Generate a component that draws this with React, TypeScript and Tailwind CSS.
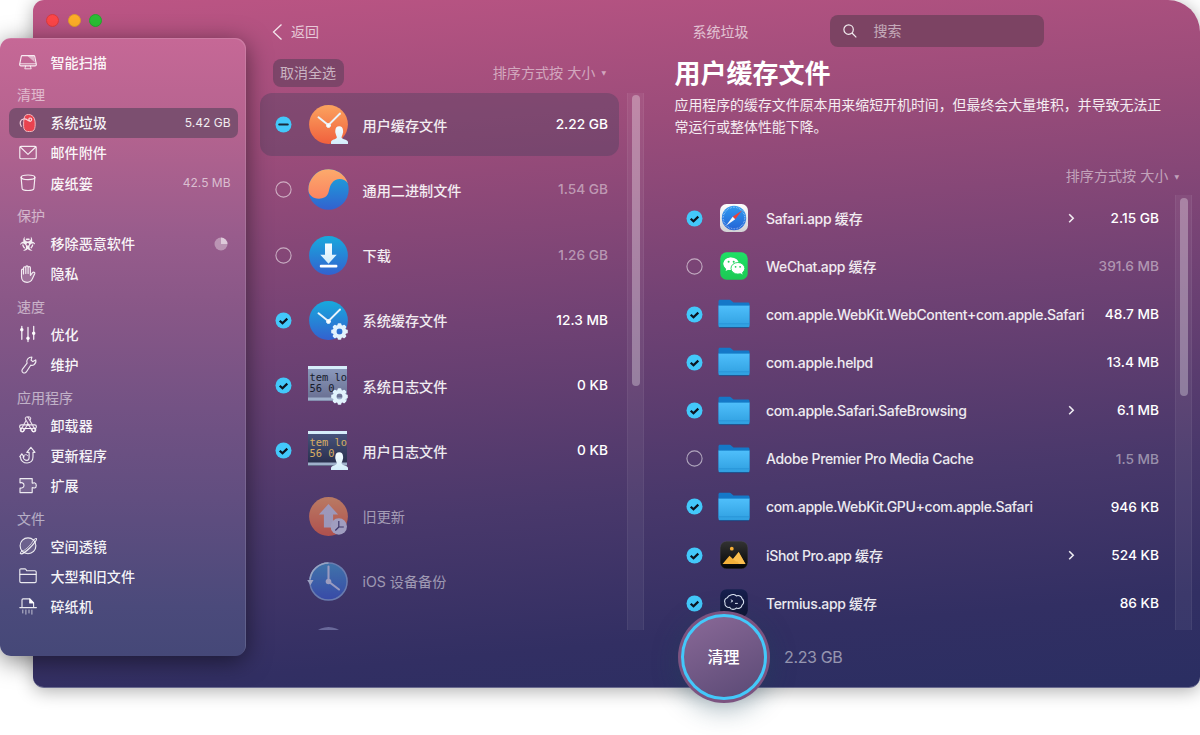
import React from "react";
import { FaBiohazard } from "react-icons/fa";

type P = { children?: React.ReactNode };

const Line = ({ children }: P) => (
  <svg width="20" height="20" viewBox="0 0 20 20" fill="none" stroke="#fff" strokeOpacity=".88" strokeWidth="1.15" strokeLinecap="round" strokeLinejoin="round">
    {children}
  </svg>
);

const sideIcons: Record<string, React.ReactNode> = {
  scan: (
    <Line>
      <path d="M4.2 3.6h11.6c.5 0 .8.3.9.8l1.6 7.8c.2 1-.4 1.6-1.3 1.6H3c-.9 0-1.500-.6-1.300-1.600l1.600-7.800c.1-.5.4-.8.9-.8z" />
      <path d="M2.300 11.800h15.400M7.600 14l-.8 2.800h6.400l-.8-2.800" strokeWidth=".9" />
      <path d="M9.500 4h6.200l1.200 6.500z" fill="#fff" fillOpacity=".5" stroke="none" />
    </Line>
  ),
  junk: (
    <svg width="20" height="20" viewBox="0 0 20 20" fill="none">
      <path d="M7.500 2.300C9 1.200 12.300 1.200 14 2.600c2.200 1.500 3.200 4.200 3.200 8.500 0 3.400-.6 6.200-2.500 7-1.600.6-5.200.6-6.700 0-1.900-.8-2.600-3.600-2.400-7 .1-3.600.3-7.200 1.900-8.800z" fill="#e9424f" stroke="#f3b6bd" strokeWidth="1" />
      <path d="M3.300 13.300C1.200 10.500 2 6.600 5.500 6c3.600-.6 4.600 2.500 6.700 2.300 2-.3 2-3.200.1-3.300-1.600 0-1.900 1.700-.8 2.300" stroke="#f7d3dc" strokeWidth="1.200" strokeLinecap="round" />
    </svg>
  ),
  mail: (
    <Line>
      <rect x="1.800" y="3.300" width="16.400" height="12.400" rx="1.300" />
      <path d="M2.300 4L10 11.300l7.700-7.300" />
    </Line>
  ),
  trash: (
    <Line>
      <ellipse cx="10" cy="4.300" rx="6.900" ry="2.300" />
      <path d="M3.100 4.400l1 11c.2 1.500 2.600 2.100 5.900 2.100s5.700-.6 5.900-2.100l1-11" />
    </Line>
  ),
  bio: (
    <span className="flex size-5 items-center justify-center text-white/90">
      <FaBiohazard size={15.5} />
    </span>
  ),
  hand: (
    <Line>
      <path d="M3.500 12.800V6.200c0-1.500 2-1.500 2 0V10 3.900c0-1.600 2.300-1.600 2.300 0v5.500V3c0-1.600 2.300-1.600 2.300 0v6.400V3.800c0-1.600 2.300-1.600 2.300 0v7.500l1.900-2.400c1-1.300 3-.7 2.400.8l-2.400 5.200c-.9 2.300-2.600 3.400-5.200 3.400-3.500 0-5.600-1.800-5.600-5.500z" fill="#fff" fillOpacity=".15" />
    </Line>
  ),
  sliders: (
    <Line>
      <path d="M3.800 2.300v13M10 3.500v14M15.700 2.300v13" strokeWidth="1.300" />
      <circle cx="3.800" cy="5.700" r="1.200" fill="#fff" />
      <circle cx="10" cy="14.200" r="1.200" fill="#fff" />
      <circle cx="15.700" cy="9.300" r="1.200" fill="#fff" />
    </Line>
  ),
  wrench: (
    <Line>
      <path d="M13.900 2l-.8 3.200 1.800 1.400 2.800-1.700c.5 1.700-.1 3.700-1.700 4.800-1 .7-2.200.8-3.300.5l-4.200 6.500c-.9 1.300-2.400 1.700-3.500.9-1.200-.8-1.400-2.300-.5-3.500l4.600-5.900c-.6-1.300-.4-2.900.5-4.200 1-1.300 2.700-2 4.300-2z" />
    </Line>
  ),
  apps: (
    <Line>
      <rect x="1.600" y="9.900" width="16.800" height="3.600" rx="1.800" />
      {["M11.100 3.500L4.600 14.900", "M8.900 3.500L15.400 14.900"].map((d) => (
        <g key={d}>
          <path d={d} strokeWidth="4.300" strokeOpacity="1" stroke="#e8dcea" />
          <path d={d} strokeWidth="2.100" strokeOpacity="1" stroke="#775385" />
        </g>
      ))}
      <path d="M6.500 9.900h7M6.500 13.500h7" />
      <circle cx="4.100" cy="15" r="1.900" />
      <circle cx="15.900" cy="15" r="1.900" />
    </Line>
  ),
  update: (
    <Line>
      <path d="M8.800 7.400L12.900 2.300 17 7.400h-2v4.600c0 3.600-2.400 6-5.900 6-3.700 0-6.600-2.500-6.600-6l-.8-.2L3.800 8.800l2.300 3H5.200c0 2 1.700 3.600 3.700 3.600 1.600 0 2.200-1.200 2.200-2.900V7.400z" />
      <path d="M5.300 12c.6-3 3.600-3 4.600-1.200" strokeWidth=".9" />
    </Line>
  ),
  ext: (
    <Line>
      <path d="M2 2.600h12.200v4.500c.9.700 1-.5 2.200-.3 1.100.2 1.900 1.200 1.900 2.600s-.8 2.400-1.900 2.600c-1.200.3-1.300-1-2.200-.3v4.900H2V12c1 .3 4 0 4-2.800S3 6.500 2 6.900z" fill="#fff" fillOpacity=".12" />
    </Line>
  ),
  lens: (
    <Line>
      <circle cx="10" cy="9.800" r="7.900" fill="#fff" fillOpacity=".12" />
      <path d="M15.300 4.100c1.500-1.200 2.700-1.800 3.100-1.400.8.8-2.400 5.100-6.700 9.300s-8.400 6.500-9.200 5.700c-.4-.4.2-1.600 1.500-3.200" />
      <path d="M15 4.900C13.400 8.300 8.700 13 5.400 14.800" strokeWidth=".7" />
    </Line>
  ),
  folder: (
    <Line>
      <path d="M1.800 15.300V4c0-.7.500-1.200 1.200-1.200h3.800c.6 0 .9.200 1.200.7l.7 1.200h8.200c.8 0 1.300.5 1.300 1.300v9.300c0 .8-.5 1.300-1.300 1.300H3.100c-.8 0-1.300-.5-1.300-1.300z" />
      <path d="M2.200 8.300h15.600" />
    </Line>
  ),
  shred: (
    <Line>
      <path d="M1.800 10.600h16.600M4 10V2.900c0-.7.400-1 1-1h6.700l3.900 3.900V10" />
      <path d="M11.700 2v4h3.800z" fill="#fff" />
      <path d="M4.800 13v3M7.900 13v4.200M11 13v3M13.900 13v4.200" strokeWidth="1" strokeOpacity=".65" />
    </Line>
  ),
};

type SideRow = { head?: string; icon?: string; label?: string; size?: string; active?: boolean; pie?: boolean };

const side: SideRow[] = [
  { icon: "scan", label: "智能扫描" },
  { head: "清理" },
  { icon: "junk", label: "系统垃圾", size: "5.42 GB", active: true },
  { icon: "mail", label: "邮件附件" },
  { icon: "trash", label: "废纸篓", size: "42.5 MB" },
  { head: "保护" },
  { icon: "bio", label: "移除恶意软件", pie: true },
  { icon: "hand", label: "隐私" },
  { head: "速度" },
  { icon: "sliders", label: "优化" },
  { icon: "wrench", label: "维护" },
  { head: "应用程序" },
  { icon: "apps", label: "卸载器" },
  { icon: "update", label: "更新程序" },
  { icon: "ext", label: "扩展" },
  { head: "文件" },
  { icon: "lens", label: "空间透镜" },
  { icon: "folder", label: "大型和旧文件" },
  { icon: "shred", label: "碎纸机" },
];

function Sidebar() {
  return (
    <aside className="absolute top-[38px] left-0 h-[618px] w-[246px] rounded-[11px] bg-[linear-gradient(180deg,#c66896_0%,#b4638f_15%,#985c8c_32%,#885787_44%,#735284_60%,#5d4d7f_78%,#4b4a7b_92%,#454878_100%)] px-[8.500px] pt-[9px] shadow-[inset_-1px_1px_0_rgba(255,255,255,0.13),0_5px_24px_rgba(0,0,0,0.5)]">
      {side.map((r, i) =>
        r.head ? (
          <div key={i} className="h-[30.25px] pt-[3px] pl-[8.500px] text-sm leading-[30px] text-white/55">
            {r.head}
          </div>
        ) : (
          <div
            key={i}
            className={
              "flex h-[30.25px] w-[229px] items-center rounded-[7px] pr-[7px] pl-[9px] " + (r.active ? "bg-[#7c4f70]" : "")
            }
          >
            {sideIcons[r.icon!]}
            <span className="ml-[13px] flex-1 text-[14.100px] font-medium text-white/95">{r.label}</span>
            {r.size && (
              <span className={r.active ? "text-[12px] text-white/90" : "text-[12px] text-white/60"}>{r.size}</span>
            )}
            {r.pie && (
              <svg width="14" height="14" viewBox="0 0 14 14" className="mr-[3px]">
                <circle cx="7" cy="7" r="6.500" fill="#fff" fillOpacity=".35" />
                <path d="M7 7V.5A6.500 6.500 0 0 1 13.500 7z" fill="#fff" fillOpacity=".5" />
              </svg>
            )}
          </div>
        ),
      )}
    </aside>
  );
}

type State = "on" | "off" | "part" | "none";

function Check({ state }: { state: State }) {
  return (
    <svg width="17" height="17" viewBox="0 0 17 17" fill="none" className="shrink-0">
      {state === "off" && <circle cx="8.500" cy="8.500" r="7.600" stroke="#fff" strokeOpacity=".55" strokeWidth="1.100" />}
      {(state === "on" || state === "part") && <circle cx="8.500" cy="8.500" r="8" fill="#43c8fa" />}
      {state === "on" && <path d="M4.700 8.700l2.800 2.600 4.800-4.700" stroke="#0c1420" strokeWidth="2.200" />}
      {state === "part" && <path d="M4.300 8.500h8.400" stroke="#1b2a3b" strokeWidth="2.200" strokeLinecap="round" />}
    </svg>
  );
}

const Person = () => (
  <path d="M25 42v-2.200c.3-2 5-2.600 5.800-4.100.3-1-.8-2.200-1.100-4-.4-1-.6-2-.4-3 .1-3 1.600-4.400 3.900-4.400s3.800 1.400 3.900 4.400c.2 1 0 2-.4 3-.3 1.800-1.400 3-1.100 4 .8 1.500 6.100 2.100 6.400 4.100V42z" fill="url(#ice)" />
);

const Gear = () => (
  <g transform="translate(33.500 33.500)">
    {[0, 45, 90, 135, 180, 225, 270, 315].map((a) => (
      <rect key={a} x="-1.900" y="-8.300" width="3.800" height="5" rx="1" fill="#e2f3fd" transform={`rotate(${a})`} />
    ))}
    <circle r="4.900" fill="none" stroke="#e2f3fd" strokeWidth="3.800" />
  </g>
);

const Hands = () => (
  <g stroke="#e9f4fb" strokeLinecap="round">
    <path d="M12.500 15.300l10 8" strokeWidth="2" />
    <path d="M34 11.500L22.500 23" strokeWidth="1.800" />
    <circle cx="22.500" cy="23.500" r="2" fill="#fff" />
  </g>
);

const junkIcons: Record<string, React.ReactNode> = {
  userCache: (
    <>
      <circle cx="22.500" cy="22.500" r="19.400" fill="url(#orange)" />
      <Hands />
      <Person />
    </>
  ),
  binary: (
    <>
      <circle cx="22.500" cy="22.500" r="20.200" fill="url(#blue)" />
      <path d="M2.400 22.500a20.200 20.200 0 0 1 39.400-6.300c-4-5.500-12-5.500-16 0-2.600 3.600-2.200 6.300-3.500 9.800-1.300 3.700-5 5.700-9.300 5.700-6.300 0-10.600-4-10.600-9.200z" fill="url(#peach)" />
    </>
  ),
  download: (
    <>
      <circle cx="22.500" cy="22.500" r="19.400" fill="url(#blue)" />
      <path d="M19 10.500h7v11.300h4.700l-8.200 8.900-8.200-8.900H19z" fill="url(#ice)" />
      <rect x="13.800" y="31.800" width="17.600" height="2.700" rx="1" fill="#fff" />
    </>
  ),
  sysCache: (
    <>
      <circle cx="22.500" cy="22.500" r="19.400" fill="url(#blue)" />
      <Hands />
      <Gear />
    </>
  ),
  oldUpdate: (
    <g opacity=".62">
      <circle cx="22.500" cy="22.500" r="19.400" fill="url(#orange)" />
      <path d="M22.500 10l9.600 10.500h-5v13h-9.200v-13h-5z" fill="#cfd2ea" />
      <circle cx="32.800" cy="32.500" r="8.200" fill="#d6dcf3" />
      <path d="M32.800 27v6h5M32.800 33l-3.500 3.500" stroke="#39376a" strokeWidth="1.200" fill="none" />
    </g>
  ),
  ios: (
    <g opacity=".68">
      <circle cx="22.500" cy="22.500" r="18.600" fill="url(#blueDeep)" stroke="#7f9fd2" strokeWidth="1.500" />
      <path d="M4 20.500a18.600 18.600 0 0 1 18.500-16.600" fill="none" stroke="#bed9ee" strokeWidth="1.500" />
      <path d="M1.200 21h6.300l-3.100 5.300z" fill="#c6d4ec" />
      <path d="M22.500 7.500v15l10.500 8" fill="none" stroke="#c3cbea" strokeWidth="2.100" strokeLinecap="round" />
      <circle cx="22.500" cy="22.500" r="2.800" fill="#c9cfe9" />
    </g>
  ),
  last: <circle cx="22.500" cy="23" r="20" fill="#69699a" />,
};

function LogIcon({ user }: { user?: boolean }) {
  return (
    <>
      <rect x="2" y="3" width="39" height="35" fill={user ? "url(#logDark)" : "url(#logLight)"} />
      <rect x="2" y="3" width="39" height="3" fill="#d6eefa" />
      <rect x="2" y="34.500" width="39" height="3" fill="#9fb0cb" />
      <g fill={user ? "#d9ad62" : "#171b2c"} fontFamily="DejaVu Sans Mono" fontSize="10.400">
        <text x="3.400" y="17.600">tem lo</text>
        <text x="3.400" y="29.400">56 0</text>
      </g>
      {user ? <Person /> : <Gear />}
    </>
  );
}

function Defs() {
  const g = (id: string, a: string, b: string) => (
    <linearGradient id={id} x1="0" y1="0" x2="0" y2="1">
      <stop offset="0" stopColor={a} />
      <stop offset="1" stopColor={b} />
    </linearGradient>
  );
  return (
    <svg width="0" height="0" className="absolute">
      <defs>
        {g("orange", "#fba35f", "#f0603d")}
        {g("peach", "#fcaa6c", "#fb8460")}
        {g("blue", "#18a9dd", "#3361cf")}
        {g("blueDeep", "#3f92c9", "#3755c6")}
        {g("ice", "#f6fcff", "#d3edfb")}
        {g("logLight", "#8d9cbf", "#676d90")}
        {g("logDark", "#4a5680", "#262b48")}
        {g("fold", "#4fbffb", "#2f9fe0")}
        {g("tile", "#fdfdfd", "#d2d2d4")}
        {g("safari", "#2f9bf0", "#2463d6")}
        {g("wechat", "#1fe166", "#1cc854")}
        {g("dark", "#333", "#050505")}
        {g("navy", "#182150", "#0d1130")}
      </defs>
    </svg>
  );
}

type Junk = { icon: string; label: string; size?: string; state: State; sel?: boolean };

const junk: Junk[] = [
  { icon: "userCache", label: "用户缓存文件", size: "2.22 GB", state: "part", sel: true },
  { icon: "binary", label: "通用二进制文件", size: "1.54 GB", state: "off" },
  { icon: "download", label: "下载", size: "1.26 GB", state: "off" },
  { icon: "sysCache", label: "系统缓存文件", size: "12.3 MB", state: "on" },
  { icon: "sysLog", label: "系统日志文件", size: "0 KB", state: "on" },
  { icon: "userLog", label: "用户日志文件", size: "0 KB", state: "on" },
  { icon: "oldUpdate", label: "旧更新", state: "none" },
  { icon: "ios", label: "iOS 设备备份", state: "none" },
  { icon: "last", label: "", state: "none" },
];

function SortBy() {
  return (
    <span className="flex items-center text-[14.100px] text-white/50">
      排序方式按 大小<span className="ml-[6px] font-['DejaVu_Sans'] text-[6px]">▼</span>
    </span>
  );
}

function JunkColumn() {
  return (
    <section className="flex w-[414px] flex-col pl-[14px]">
      <div className="flex h-[59px] items-center pt-[4px] pl-[12px] text-sm text-white/70">
        <svg width="11" height="18" viewBox="0 0 11 18" fill="none" className="mr-[8px]">
          <path d="M9.500 1.500L1.500 9l8 7.500" stroke="#fff" strokeOpacity=".85" strokeWidth="1.300" />
        </svg>
        返回
      </div>
      <div className="flex h-7 items-center justify-between pr-[54px] pl-[12.500px]">
        <span className="flex h-7 w-[71px] items-center justify-center rounded-[8px] bg-[#7d4569] text-sm text-white/60">取消全选</span>
        <SortBy />
      </div>
      <div className="mt-1.5 flex h-[537px] overflow-hidden">
        <div className="w-[367px] shrink-0">
          {junk.map((j) => (
            <div key={j.icon} className="h-[65.250px]">
              <div className={"flex h-[63px] w-[358.500px] items-center rounded-[12px] pr-[10.500px] pl-[15px] " + (j.sel ? "bg-[#42405c]/35" : "")}>
                <Check state={j.state} />
                <svg width="45" height="45" viewBox="0 0 45 45" className="ml-[14px] shrink-0">
                  {j.icon === "sysLog" ? <LogIcon /> : j.icon === "userLog" ? <LogIcon user /> : junkIcons[j.icon]}
                </svg>
                <span className={"ml-[11.500px] flex-1 pt-[1.500px] text-[14.150px] " + (j.state === "none" ? "text-white/50" : "font-medium text-white/90")}>{j.label}</span>
                {j.size && <span className={"text-[13.700px] font-medium " + (j.state === "off" ? "text-white/45" : "text-white")}>{j.size}</span>}
              </div>
            </div>
          ))}
        </div>
        <div className="h-[537px] w-[17px] border-x border-white/5 bg-white/5 px-[4px] pt-[2px]">
          <div className="h-[291px] w-[8px] rounded-full bg-white/30" />
        </div>
      </div>
    </section>
  );
}

function FileIcon({ kind }: { kind: string }) {
  if (kind === "folder")
    return (
      <svg width="32" height="32" viewBox="0 0 32 32">
        <path d="M.5 27V3.300c0-1 .6-1.600 1.600-1.600h9c1 0 1.600.3 2.300 1l2.100 1.900h14.400c1 0 1.600.6 1.600 1.600V27z" fill="#1478c8" />
        <path d="M.5 7.500h31v20.300c0 1-.6 1.600-1.600 1.600H2.100c-1 0-1.600-.6-1.600-1.600z" fill="url(#fold)" />
        <path d="M.5 7.300h31M.5 25.800h31" stroke="#2089cf" strokeWidth=".6" />
        <path d="M1.300 29.600h29.400" stroke="#174a86" strokeWidth=".8" />
      </svg>
    );
  if (kind === "safari")
    return (
      <svg width="32" height="32" viewBox="0 0 32 32">
        <rect x="2" y="2" width="28" height="28" rx="6.500" fill="url(#tile)" />
        <circle cx="16" cy="16" r="12.200" fill="url(#safari)" />
        <circle cx="16" cy="16" r="10.800" fill="none" stroke="#d8ecff" strokeOpacity=".75" strokeWidth="1.400" strokeDasharray=".5 1.100" />
        <path d="M24 8.500l-6.800 8.800-2.500-2.600z" fill="#ef4136" />
        <path d="M8 23.700l6.700-9 2.500 2.600z" fill="#f6f9fc" />
      </svg>
    );
  if (kind === "wechat")
    return (
      <svg width="32" height="32" viewBox="0 0 32 32">
        <rect x="2.300" y="2.300" width="27.400" height="27.400" rx="6.300" fill="url(#wechat)" />
        <path d="M13.200 7.500c-4.300 0-7.700 2.800-7.700 6.300 0 2 1.100 3.700 2.800 4.900l-.7 2.400 2.700-1.400c1 .3 1.900.4 2.900.4z" fill="#fff" />
        <ellipse cx="13.200" cy="13.800" rx="7.700" ry="6.300" fill="#fff" />
        <ellipse cx="19.900" cy="18.300" rx="6.900" ry="5.800" fill="#fff" stroke="#1dd45c" strokeWidth=".9" />
        <path d="M22 22.500l2.500 2.200-.6-3.100z" fill="#fff" />
        <g fill="#1dcf59">
          <circle cx="10.600" cy="11.800" r="1" />
          <circle cx="15.700" cy="11.800" r="1" />
          <circle cx="17.600" cy="16.800" r=".9" />
          <circle cx="22.100" cy="16.800" r=".9" />
        </g>
      </svg>
    );
  if (kind === "ishot")
    return (
      <svg width="32" height="32" viewBox="0 0 32 32">
        <rect x="2.200" y="2.200" width="27.600" height="27.600" rx="6.500" fill="url(#dark)" stroke="#5a5a62" strokeOpacity=".5" strokeWidth=".5" />
        <circle cx="13.800" cy="9.700" r="1.900" fill="#f6ae35" />
        <path d="M4.500 25l7-8.200 3.500 3.300 5.700-7L27.500 25z" fill="#f5b13a" />
        <path d="M15 20.100l3 2.700 1.300-.3 1.900 2.500H27.500L20.700 13.100z" fill="#ffc558" fillOpacity=".7" />
      </svg>
    );
  return (
    <svg width="32" height="32" viewBox="0 0 32 32" fill="none">
      <rect x="2.200" y="2.200" width="27.600" height="27.600" rx="6.500" fill="url(#navy)" />
      <path d="M12.300 8.300c2-1.400 4.800-1 6.100.6 2.200-.9 5.300.2 5.700 2.900 2.100 1.600 2.100 5-.1 6.300-.4 2.600-3.400 4.100-5.700 3-1.700 2-5.400 1.600-6.500-.7-2.700.5-5.400-1.800-4.800-4.300-1.200-2.600.4-5 2.400-5.300.5-1.200 1.600-2.100 2.900-2.500z" stroke="#dfe7f5" strokeWidth="1.100" />
      <path d="M12.800 12.700l2 1.300-2 1.200M17 16.400h2.800" stroke="#dfe7f5" strokeWidth="1" />
    </svg>
  );
}

type F = { kind: string; label: string; cjk?: string; size: string; on: boolean; more?: boolean };

const files: F[] = [
  { kind: "safari", label: "Safari.app ", cjk: "缓存", size: "2.15 GB", on: true, more: true },
  { kind: "wechat", label: "WeChat.app ", cjk: "缓存", size: "391.6 MB", on: false },
  { kind: "folder", label: "com.apple.WebKit.WebContent+com.apple.Safari", size: "48.7 MB", on: true },
  { kind: "folder", label: "com.apple.helpd", size: "13.4 MB", on: true },
  { kind: "folder", label: "com.apple.Safari.SafeBrowsing", size: "6.1 MB", on: true, more: true },
  { kind: "folder", label: "Adobe Premier Pro Media Cache", size: "1.5 MB", on: false },
  { kind: "folder", label: "com.apple.WebKit.GPU+com.apple.Safari", size: "946 KB", on: true },
  { kind: "ishot", label: "iShot Pro.app ", cjk: "缓存", size: "524 KB", on: true, more: true },
  { kind: "termius", label: "Termius.app ", cjk: "缓存", size: "86 KB", on: true },
];

function Details() {
  return (
    <section className="flex w-[540px] flex-col">
      <div className="flex h-[47px] items-start pt-[15px] pl-[32.500px]">
        <span className="w-[137px] text-sm leading-[34px] text-white/65">系统垃圾</span>
        <div className="flex h-8 w-[214px] items-center rounded-[8px] bg-[#7c4363] pl-[13px]">
          <svg width="14" height="14" viewBox="0 0 14 14" fill="none" stroke="#fff" strokeOpacity=".9" strokeWidth="1.200">
            <circle cx="5.600" cy="5.600" r="4.700" />
            <path d="M9 9l4.300 4.300" />
          </svg>
          <span className="ml-[17px] text-sm text-white/55">搜索</span>
        </div>
      </div>
      <h1 className="mt-[8px] pl-[14.500px] text-[26px] leading-[38px] font-bold text-white">用户缓存文件</h1>
      <p className="mt-[2px] w-[515px] pl-[14.500px] text-[13.920px] leading-[21.500px] text-white/90">
        应用程序的缓存文件原本用来缩短开机时间，但最终会大量堆积，并导致无法正
        <br />
        常运行或整体性能下降。
      </p>
      <div className="mt-[28px] flex h-[20px] items-center justify-end pr-[21px]">
        <SortBy />
      </div>
      <div className="mt-[9px] flex h-[435px] overflow-hidden">
        <div className="w-[515px] shrink-0">
          {files.map((f) => (
            <div key={f.label} className="-mt-[1px] mb-[1px] flex h-[48.150px] items-center pr-[16px] pl-[25.500px]">
              <Check state={f.on ? "on" : "off"} />
              <span className="mr-[16.500px] ml-[15px]">
                <FileIcon kind={f.kind} />
              </span>
              <span className="min-w-0 flex-1 text-[14px] font-medium whitespace-nowrap text-white/90">
                <span className="tracking-[-0.340px]">{f.label}</span>
                {f.cjk}
              </span>
              {f.more && (
                <svg width="7" height="11" viewBox="0 0 7 11" fill="none" className="shrink-0">
                  <path d="M1.200 1.300l4 4-4 4" stroke="#fff" strokeOpacity=".9" strokeWidth="1.600" />
                </svg>
              )}
              <span className={"shrink-0 text-right text-[13.700px] font-medium " + (f.more ? "w-[84.500px] " : "") + (f.on ? "text-white" : "text-white/45")}>{f.size}</span>
            </div>
          ))}
        </div>
        <div className="w-[17px] border-x border-white/5 bg-white/5 px-[4px] pt-[3px]">
          <div className="h-[198px] w-[8px] rounded-full bg-white/30" />
        </div>
      </div>
      <span className="mt-[14.500px] pl-[124px] text-[16px] leading-6 tracking-[-0.350px] text-white/50">2.23 GB</span>
    </section>
  );
}

export default function App() {
  return (
    <div className="relative h-[735px] w-[1200px] overflow-hidden bg-white font-['Inter','Noto_Sans_CJK_SC',sans-serif]">
      <Defs />
      <main className="ml-[33px] flex h-[688px] w-[1167px] overflow-hidden rounded-[11px] rounded-tr-[32px] border-b border-[#6a6b90] bg-[linear-gradient(175deg,#bd5584_0%,#9b4c7a_22%,#714274_46%,#49386b_70%,#322f63_88%,#2a2e62_100%)] shadow-[0_3px_18px_rgba(0,0,0,0.32)]">
        <div className="flex w-[213px] gap-[8.500px] pt-[14px] pl-[13px]">
          <span className="size-[13px] rounded-full border border-[#d93b3f] bg-[#fc4648]" />
          <span className="size-[13px] rounded-full border border-[#df9a2b] bg-[#fdae28]" />
          <span className="size-[13px] rounded-full border border-[#25a52f] bg-[#2abe34]" />
        </div>
        <JunkColumn />
        <Details />
      </main>
      <Sidebar />
      <button className="absolute top-[611px] left-[677.500px] flex size-[92px] items-center justify-center rounded-full bg-[#7c5380] p-[3px] shadow-[0_6px_26px_rgba(30,70,90,0.4)]">
        <span className="flex size-full items-center justify-center rounded-full border-[3px] border-[#43c8fa] bg-[linear-gradient(155deg,#856694_10%,#5d4b77_95%)] text-base font-medium text-white">清理</span>
      </button>
    </div>
  );
}
